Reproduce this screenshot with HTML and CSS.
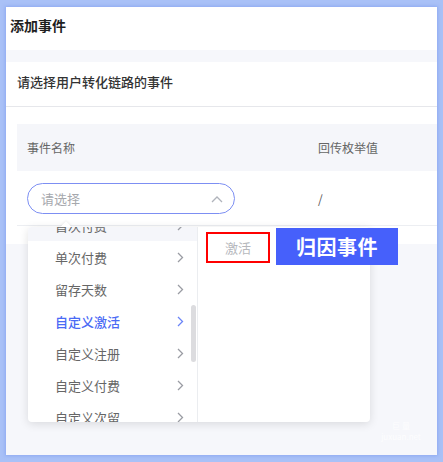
FILE: index.html
```html
<!DOCTYPE html>
<html lang="zh">
<head>
<meta charset="utf-8">
<link rel="stylesheet" href="styles.css">
</head>
<body>
<div class="frame">
  <div class="panel">
    <div class="head">添加事件</div>
    <div class="card">
      <div class="sec-title">请选择用户转化链路的事件</div>
      <div class="table">
        <div class="tr th">
          <div class="c1">事件名称</div>
          <div class="c2">回传枚举值</div>
        </div>
        <div class="tr td">
          <div class="c1">
            <div class="select">
              <span class="ph">请选择</span>
              <svg class="up" width="12" height="8" viewBox="0 0 12 8"><path d="M1 7 L6 2 L11 7" fill="none" stroke="#b0b3bb" stroke-width="1.3"/></svg>
            </div>
          </div>
          <div class="c2 slash">/</div>
        </div>
      </div>
    </div>
    <div class="watermark"><div>巨 量</div><div>juxuan.net</div></div>
    <div class="dropdown">
      <div class="arrow"></div>
      <div class="col-left">
        <div class="list">
          <div class="item hover"><span>首次付费</span><svg class="chev" width="7" height="11" viewBox="0 0 7 11"><path d="M1 1 L5.5 5.5 L1 10" fill="none" stroke="currentColor" stroke-width="1.3"/></svg></div>
          <div class="item"><span>单次付费</span><svg class="chev" width="7" height="11" viewBox="0 0 7 11"><path d="M1 1 L5.5 5.5 L1 10" fill="none" stroke="currentColor" stroke-width="1.3"/></svg></div>
          <div class="item"><span>留存天数</span><svg class="chev" width="7" height="11" viewBox="0 0 7 11"><path d="M1 1 L5.5 5.5 L1 10" fill="none" stroke="currentColor" stroke-width="1.3"/></svg></div>
          <div class="item active"><span>自定义激活</span><svg class="chev" width="7" height="11" viewBox="0 0 7 11"><path d="M1 1 L5.5 5.5 L1 10" fill="none" stroke="currentColor" stroke-width="1.3"/></svg></div>
          <div class="item"><span>自定义注册</span><svg class="chev" width="7" height="11" viewBox="0 0 7 11"><path d="M1 1 L5.5 5.5 L1 10" fill="none" stroke="currentColor" stroke-width="1.3"/></svg></div>
          <div class="item"><span>自定义付费</span><svg class="chev" width="7" height="11" viewBox="0 0 7 11"><path d="M1 1 L5.5 5.5 L1 10" fill="none" stroke="currentColor" stroke-width="1.3"/></svg></div>
          <div class="item"><span>自定义次留</span><svg class="chev" width="7" height="11" viewBox="0 0 7 11"><path d="M1 1 L5.5 5.5 L1 10" fill="none" stroke="currentColor" stroke-width="1.3"/></svg></div>
        </div>
        <div class="scrollbar"></div>
      </div>
      <div class="col-right">
        <div class="opt">激活</div>
        <div class="tag">归因事件</div>
      </div>
    </div>
  </div>
</div>
</body>
</html>
```

FILE: styles.css
```css
* { box-sizing: border-box; }
html, body { margin: 0; padding: 0; }
body {
  width: 443px;
  height: 462px;
  background: #a9c1f7;
  font-family: "Noto Sans CJK SC", "Noto Sans", sans-serif;
  overflow: hidden;
}
.frame {
  padding: 7px 6px 7px 6px;
  height: 462px;
}
.panel {
  position: relative;
  height: 448px;
  background: #f6f7fb;
  box-shadow: 0 0 3px 1px rgba(120,150,240,0.5);
}
.head {
  height: 43px;
  background: #fff;
  padding: 8px 0 0 4px;
  font-size: 14px;
  line-height: 20px;
  font-weight: 700;
  color: #1f1f1f;
}
.card {
  margin-top: 12px;
  background: #fff;
  height: 182px;
}
.sec-title {
  height: 45px;
  padding: 11px 0 0 11px;
  font-size: 13px;
  line-height: 18px;
  font-weight: 500;
  color: #333;
  border-bottom: 1px solid #e6e7eb;
}
.table {
  margin: 17px 0 0 11px;
}
.tr {
  display: flex;
  align-items: center;
}
.th {
  height: 47px;
  background: #f5f6fa;
  font-size: 12px;
  color: #666;
}
.td {
  height: 55px;
  border-bottom: 1px solid #eceef2;
}
.c1 { width: 301px; padding-left: 10px; }
.c2 { flex: 1; }
.th .c1 { padding-top: 0; }
.slash { font-size: 12px; color: #555; padding-top: 1px; }
.select {
  width: 208px;
  height: 31px;
  margin-top: 1px;
  border: 1.5px solid #7d8ff3;
  border-radius: 16px;
  display: flex;
  align-items: center;
  justify-content: space-between;
  padding: 0 11px 0 13px;
}
.ph { font-size: 13px; color: #a6a8ad; }
.up { display: block; }
.dropdown {
  position: absolute;
  left: 22px;
  top: 220px;
  width: 342px;
  height: 195px;
  background: #fff;
  border-radius: 4px;
  box-shadow: 0 2px 10px rgba(0,0,0,0.12);
  display: flex;
}
.arrow {
  position: absolute;
  left: 34px;
  top: -4px;
  width: 8px;
  height: 8px;
  background: #fff;
  transform: rotate(45deg);
  box-shadow: -1px -1px 2px rgba(0,0,0,0.05);
}
.col-left {
  position: relative;
  width: 170px;
  border-right: 1px solid #ebedf0;
  overflow: hidden;
  border-radius: 4px 0 0 4px;
}
.list { margin-top: -18px; }
.item {
  height: 32px;
  display: flex;
  align-items: center;
  justify-content: space-between;
  padding: 0 13px 0 27px;
  font-size: 13px;
  color: #666;
}
.item .chev { color: #9a9ca3; }
.item.hover { background: #f5f6fa; }
.item.active { color: #4a6af5; font-weight: 500; }
.item.active .chev { color: #6a84f7; }
.scrollbar {
  position: absolute;
  left: 163px;
  top: 78px;
  width: 5px;
  height: 57px;
  border-radius: 3px;
  background: #dcdcdf;
}
.col-right {
  position: relative;
  flex: 1;
}
.opt {
  position: absolute;
  left: 8px;
  top: 5px;
  width: 64px;
  height: 31px;
  border: 2.5px solid #f00;
  font-size: 13px;
  color: #b6b8bd;
  display: flex;
  align-items: center;
  justify-content: center;
}
.tag {
  position: absolute;
  left: 78px;
  top: 1px;
  width: 122px;
  height: 37px;
  background: #4660fb;
  color: #fff;
  font-size: 20px;
  font-weight: 700;
  display: flex;
  align-items: center;
  justify-content: center;
  letter-spacing: 0.5px;
}
.watermark {
  position: absolute;
  left: 370px;
  top: 413px;
  width: 50px;
  text-align: center;
  font-size: 8px;
  line-height: 11px;
  color: rgba(255,255,255,0.8);
}
```
